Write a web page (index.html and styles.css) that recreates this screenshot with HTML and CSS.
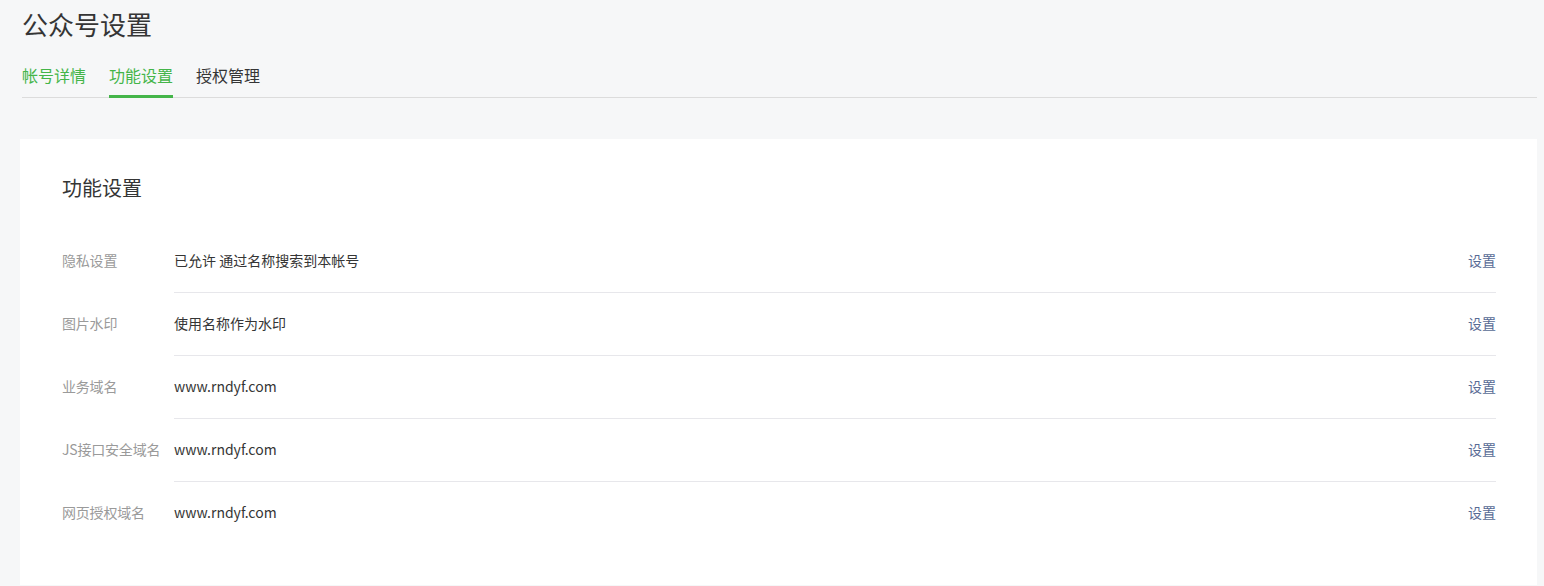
FILE: index.html
```html
<!DOCTYPE html>
<html lang="zh-CN">
<head>
<meta charset="utf-8">
<title>公众号设置</title>
<link rel="stylesheet" href="styles.css">
</head>
<body>
<div class="page">
  <header class="head">
    <h1 class="title">公众号设置</h1>
    <nav class="tabs">
      <a class="tab tab-green">帐号详情</a>
      <a class="tab tab-green tab-active">功能设置</a>
      <a class="tab">授权管理</a>
    </nav>
  </header>
  <section class="card">
    <h2 class="card-title">功能设置</h2>
    <div class="rows">
      <div class="row">
        <div class="label">隐私设置</div>
        <div class="content"><span class="value">已允许 通过名称搜索到本帐号</span><a class="link">设置</a></div>
      </div>
      <div class="row">
        <div class="label">图片水印</div>
        <div class="content"><span class="value">使用名称作为水印</span><a class="link">设置</a></div>
      </div>
      <div class="row">
        <div class="label">业务域名</div>
        <div class="content"><span class="value">www.rndyf.com</span><a class="link">设置</a></div>
      </div>
      <div class="row">
        <div class="label">JS接口安全域名</div>
        <div class="content"><span class="value">www.rndyf.com</span><a class="link">设置</a></div>
      </div>
      <div class="row">
        <div class="label">网页授权域名</div>
        <div class="content last"><span class="value">www.rndyf.com</span><a class="link">设置</a></div>
      </div>
    </div>
  </section>
</div>
</body>
</html>
```
FILE: styles.css
```css
html, body {
  margin: 0;
  padding: 0;
  background: #f6f7f8;
  font-family: "Noto Sans CJK SC", "Noto Sans", sans-serif;
  color: #353535;
}
.page {
  padding: 0 7px 0 20px;
}
.head {
  padding: 0 0 0 2px;
}
.title {
  margin: 0;
  padding-top: 6px;
  font-size: 26px;
  line-height: 36px;
  font-weight: 400;
  color: #353535;
}
.tabs {
  display: flex;
  gap: 23px;
  margin-top: 22px;
  border-bottom: 1px solid #dcdcdc;
}
.tab {
  font-size: 16px;
  line-height: 22px;
  padding-bottom: 9px;
  border-bottom: 3px solid transparent;
  margin-bottom: -1px;
  color: #353535;
  cursor: pointer;
}
.tab-green { color: #44b549; }
.tab-active { border-bottom-color: #44b549; }
.card {
  margin-top: 41px;
  background: #fff;
  padding: 35px 41px 41px 42px;
}
.card-title {
  margin: 0;
  font-size: 20px;
  line-height: 28px;
  font-weight: 400;
  color: #353535;
}
.rows {
  margin-top: 28px;
}
.row {
  display: flex;
}
.label {
  width: 112px;
  flex: none;
  font-size: 14px;
  line-height: 20px;
  padding: 20px 0 22px;
  color: #9a9a9a;
  white-space: nowrap;
  letter-spacing: -0.2px;
}
.content {
  flex: 1;
  display: flex;
  justify-content: space-between;
  align-items: center;
  padding: 20px 0 22px;
  border-bottom: 1px solid #e7e7eb;
  font-size: 14px;
  line-height: 20px;
}
.content.last { border-bottom: none; }
.value {
  color: #353535;
  font-size: 14px;
}
.link {
  color: #576b95;
  font-size: 14px;
  cursor: pointer;
}
```
